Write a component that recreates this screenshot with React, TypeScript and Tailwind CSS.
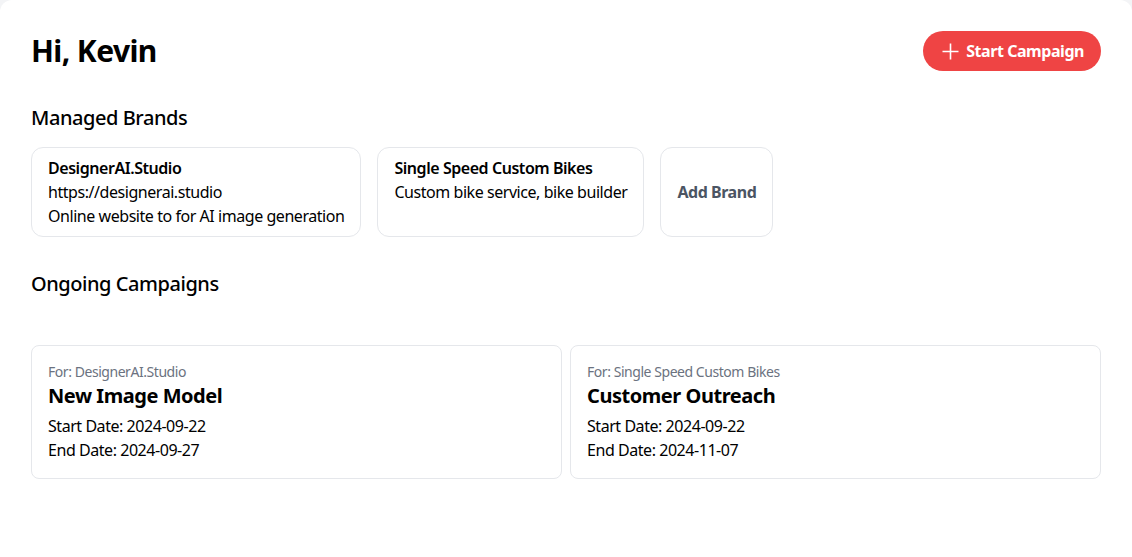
const brands = [
  {
    name: "DesignerAI.Studio",
    lines: ["https://designerai.studio", "Online website to for AI image generation"],
  },
  {
    name: "Single Speed Custom Bikes",
    lines: ["Custom bike service, bike builder"],
  },
];

const campaigns = [
  {
    brand: "DesignerAI.Studio",
    title: "New Image Model",
    start: "2024-09-22",
    end: "2024-09-27",
  },
  {
    brand: "Single Speed Custom Bikes",
    title: "Customer Outreach",
    start: "2024-09-22",
    end: "2024-11-07",
  },
];

const PlusIcon = () => (
  <svg width="17" height="17" viewBox="0 0 17 17" fill="none" stroke="currentColor" strokeWidth="1.6">
    <path d="M8.5 0.5v16M0.5 8.5h16" />
  </svg>
);

const App = () => {
  return (
    <div className="w-[1132px] h-[557px] bg-[#f3f4f6] font-['Noto_Sans',sans-serif] tracking-[-0.45px] text-black overflow-hidden">
      <div className="min-h-[600px] rounded-xl bg-white p-[31px]">
        <div className="flex items-center justify-between h-10">
          <h1 className="text-3xl font-bold tracking-[-0.6px]">Hi, Kevin</h1>
          <button className="flex items-center gap-[7px] h-10 rounded-full bg-[#ef4444] pl-[19px] pr-[17px] text-white font-bold">
            <PlusIcon />
            <span>Start Campaign</span>
          </button>
        </div>

        <h2 className="mt-[33px] text-xl leading-7 font-medium">Managed Brands</h2>
        <div className="mt-[15px] flex gap-4">
          {brands.map((b) => (
            <div key={b.name} className="h-[90px] rounded-xl border border-[#e5e7eb] px-4 py-2 leading-6">
              <p className="font-semibold">{b.name}</p>
              {b.lines.map((l) => (
                <p key={l}>{l}</p>
              ))}
            </div>
          ))}
          <button className="h-[90px] rounded-xl border border-[#e5e7eb] px-4 font-bold text-[#4b5563]">
            Add Brand
          </button>
        </div>

        <h2 className="mt-[33px] text-xl leading-7 font-medium">Ongoing Campaigns</h2>
        <div className="mt-[47px] grid grid-cols-2 gap-2">
          {campaigns.map((c) => (
            <div key={c.title} className="rounded-lg border border-[#e5e7eb] p-4">
              <p className="text-sm leading-5 text-[#6b7280]">For: {c.brand}</p>
              <p className="text-xl leading-7 font-bold mb-1">{c.title}</p>
              <p className="leading-6">Start Date: {c.start}</p>
              <p className="leading-6">End Date: {c.end}</p>
            </div>
          ))}
        </div>
      </div>
    </div>
  );
};

export default App;
